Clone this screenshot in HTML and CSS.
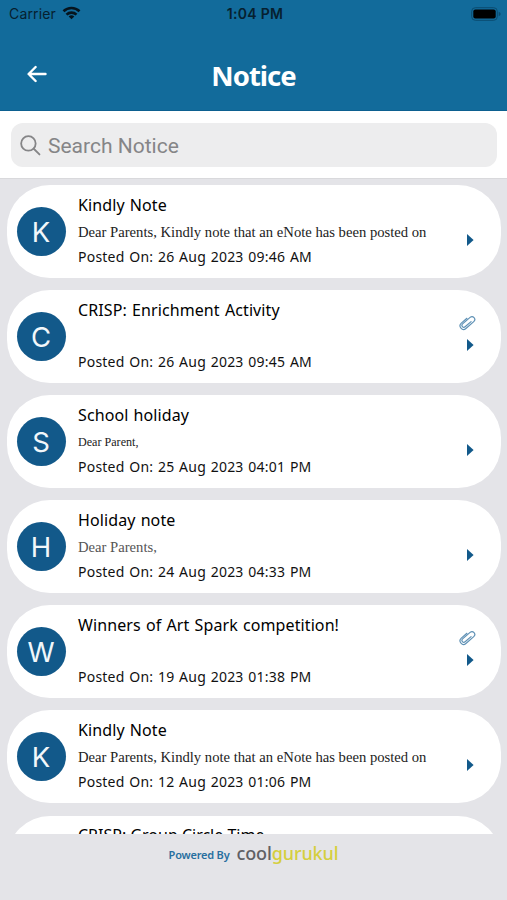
FILE: index.html
```html
<!DOCTYPE html>
<html lang="en">
<head>
<meta charset="utf-8">
<title>Notice</title>
<link rel="stylesheet" href="styles.css">
</head>
<body>
<svg class="defs" aria-hidden="true">
  <symbol id="clip" viewBox="0 0 18 18"><g transform="rotate(49 9 9)" fill="none" stroke="#5f91b5" stroke-width="1.2" stroke-linecap="round"><path d="M5.4 6v7.4a3.5 3.5 0 0 0 7 0V3a2.8 2.8 0 0 0-5.6 0v9.9a1.9 1.9 0 0 0 3.8 0V5"/></g></symbol>
  <symbol id="arrow" viewBox="0 0 7 12"><path d="M0 0 6.6 6 0 12Z" fill="#12598a"/></symbol>
</svg>
<div class="app">
  <header class="top">
    <div class="status">
      <div class="carrier"><span>Carrier</span>
        <svg class="wifi" viewBox="0 0 18 14" fill="none" stroke="#06141d" stroke-width="2.6"><path d="M1 5.2a11.5 11.5 0 0 1 16 0M4 8.6a7.2 7.2 0 0 1 10 0"/><path d="M9 13.3 6.2 10.6a4 4 0 0 1 5.6 0Z" fill="#06141d" stroke="none"/></svg>
      </div>
      <time class="clock">1:04 PM</time>
      <svg class="battery" viewBox="0 0 30 14"><rect x=".7" y=".7" width="25.6" height="12.6" rx="3.6" fill="none" stroke="#0b4c70"/><rect x="2.3" y="2.4" width="22.4" height="9.2" rx="2" fill="#000"/><path d="M27.7 4.8q2 .7 2 2.2t-2 2.2Z" fill="#0b4c70"/></svg>
    </div>
    <div class="nav">
      <svg class="back" viewBox="0 0 20 18" fill="none" stroke="#fff" stroke-width="2.4" stroke-linecap="round" stroke-linejoin="round"><path d="M18.5 9H1.8M8.6 2 1.6 9l7 7"/></svg>
      <h1>Notice</h1>
    </div>
  </header>
  <div class="search">
    <div class="field">
      <svg class="lens" viewBox="0 0 22 22" fill="none" stroke="#858587" stroke-width="1.9" stroke-linecap="round"><circle cx="8.8" cy="8.8" r="7.6"/><path d="m14.4 14.4 6 6"/></svg>
      <span>Search Notice</span>
    </div>
  </div>
  <main class="list">
    <article class="card"><div class="avatar">K</div><div class="body"><h2>Kindly Note</h2><p>Dear Parents, Kindly note that an eNote has been posted on</p><time>Posted On: 26 Aug 2023 09:46 AM</time></div><div class="end"><svg class="arrow"><use href="#arrow"/></svg></div></article>
    <article class="card"><div class="avatar">C</div><div class="body"><h2>CRISP: Enrichment Activity</h2><p></p><time>Posted On: 26 Aug 2023 09:45 AM</time></div><div class="end"><svg class="clip"><use href="#clip"/></svg><svg class="arrow"><use href="#arrow"/></svg></div></article>
    <article class="card"><div class="avatar">S</div><div class="body"><h2>School holiday</h2><p class="small">Dear Parent,</p><time>Posted On: 25 Aug 2023 04:01 PM</time></div><div class="end"><svg class="arrow"><use href="#arrow"/></svg></div></article>
    <article class="card"><div class="avatar">H</div><div class="body"><h2>Holiday note</h2><p class="pale">Dear Parents,</p><time>Posted On: 24 Aug 2023 04:33 PM</time></div><div class="end"><svg class="arrow"><use href="#arrow"/></svg></div></article>
    <article class="card"><div class="avatar">W</div><div class="body"><h2>Winners of Art Spark competition!</h2><p></p><time>Posted On: 19 Aug 2023 01:38 PM</time></div><div class="end"><svg class="clip"><use href="#clip"/></svg><svg class="arrow"><use href="#arrow"/></svg></div></article>
    <article class="card"><div class="avatar">K</div><div class="body"><h2>Kindly Note</h2><p>Dear Parents, Kindly note that an eNote has been posted on</p><time>Posted On: 12 Aug 2023 01:06 PM</time></div><div class="end"><svg class="arrow"><use href="#arrow"/></svg></div></article>
    <article class="card last"><div class="body"><h2>CRISP: Group Circle Time</h2></div></article>
  </main>
  <footer class="footer"><span class="powered">Powered By</span><span class="brand">cool<b>gurukul</b></span></footer>
</div>
</body>
</html>
```

FILE: styles.css
```css
* { box-sizing: border-box; margin: 0; padding: 0; }
body { background: #e4e4e8; font-family: "Noto Sans", sans-serif; color: #111; }
svg { display: block; flex: none; }
.defs { display: none; }
.app { display: flex; flex-direction: column; height: 900px; overflow: hidden; }
.top { height: 111px; flex: none; background: #126b9b; border-bottom: 1px solid #0c6090; }
.status { display: grid; grid-template-columns: 1fr auto 1fr; align-items: center; height: 27px; padding: 0 6px 0 9px; font-family: Inter, sans-serif; color: #06202f; }
.carrier { display: flex; align-items: center; gap: 6px; font-size: 14px; letter-spacing: .15px; }
.wifi { width: 19px; height: 14px; margin-top: -1px; }
.clock { font-size: 14px; font-weight: 600; letter-spacing: .3px; }
.battery { width: 30px; height: 14px; justify-self: end; }
.nav { display: grid; grid-template-columns: 70px 1fr 70px; align-items: center; height: 98px; }
.back { width: 20px; height: 18px; margin: -5px 0 0 27px; }
h1 { color: #fff; text-align: center; font-size: 27.5px; line-height: 36px; font-weight: 700; letter-spacing: -1px; }
.search { height: 68px; flex: none; background: #fff; padding: 12px 10px 12px 11px; border-bottom: 1px solid #d9d9dc; }
.field { height: 44px; border-radius: 12px; background: #ededee; display: flex; align-items: center; padding-left: 9px; gap: 7px; font-family: Roboto, sans-serif; font-size: 21px; color: #858587; }
.field span { padding-top: 2px; }
.lens { width: 21px; height: 21px; }
.list { height: 655px; flex: none; overflow: hidden; padding: 6px 6.5px 0 7px; }
.card { height: 93px; margin-bottom: 12.1px; border-radius: 43px; background: #fff; display: flex; align-items: center; padding: 0 25px 0 9.5px; }
.last { padding-left: 71px; margin-bottom: 0; }
.last .body { margin-left: 0; }
.last h2 { letter-spacing: 0; word-spacing: 0; }
.avatar { width: 49px; height: 49px; border-radius: 50%; background: #12598a; color: #f2f7fa; font: 400 27.5px/50px Inter, sans-serif; text-align: center; flex: none; }
.body { align-self: stretch; flex: 1; margin-left: 12.5px; padding-top: 7.5px; white-space: nowrap; }
h2 { font-size: 16px; line-height: 25px; font-weight: 400; color: #000; letter-spacing: .1px; word-spacing: .9px; }
p { height: 28px; font: 14.65px/29px "Liberation Serif", serif; color: #222; }
.small { font-size: 12.1px; }
.pale { color: #555; }
time { display: block; }
.body time { font-size: 14px; line-height: 21px; letter-spacing: .22px; word-spacing: .85px; }
.end { align-self: stretch; width: 16px; display: flex; flex-direction: column; justify-content: flex-end; align-items: center; gap: 7px; padding-bottom: 32px; }
.arrow { width: 7px; height: 12px; margin-left: 5px; }
.clip { width: 18px; height: 18px; margin-left: -2px; }
.footer { flex: 1; display: flex; justify-content: center; align-items: flex-start; gap: 7px; }
.powered { font-size: 11px; line-height: 16px; margin-top: 13px; font-weight: 600; color: #286f9f; letter-spacing: -.2px; }
.brand { font-size: 18px; line-height: 24px; margin-top: 7px; color: #606064; font-weight: 500; letter-spacing: -.12px; }
.brand b { color: #d5cf3e; font-weight: 500; }
```
